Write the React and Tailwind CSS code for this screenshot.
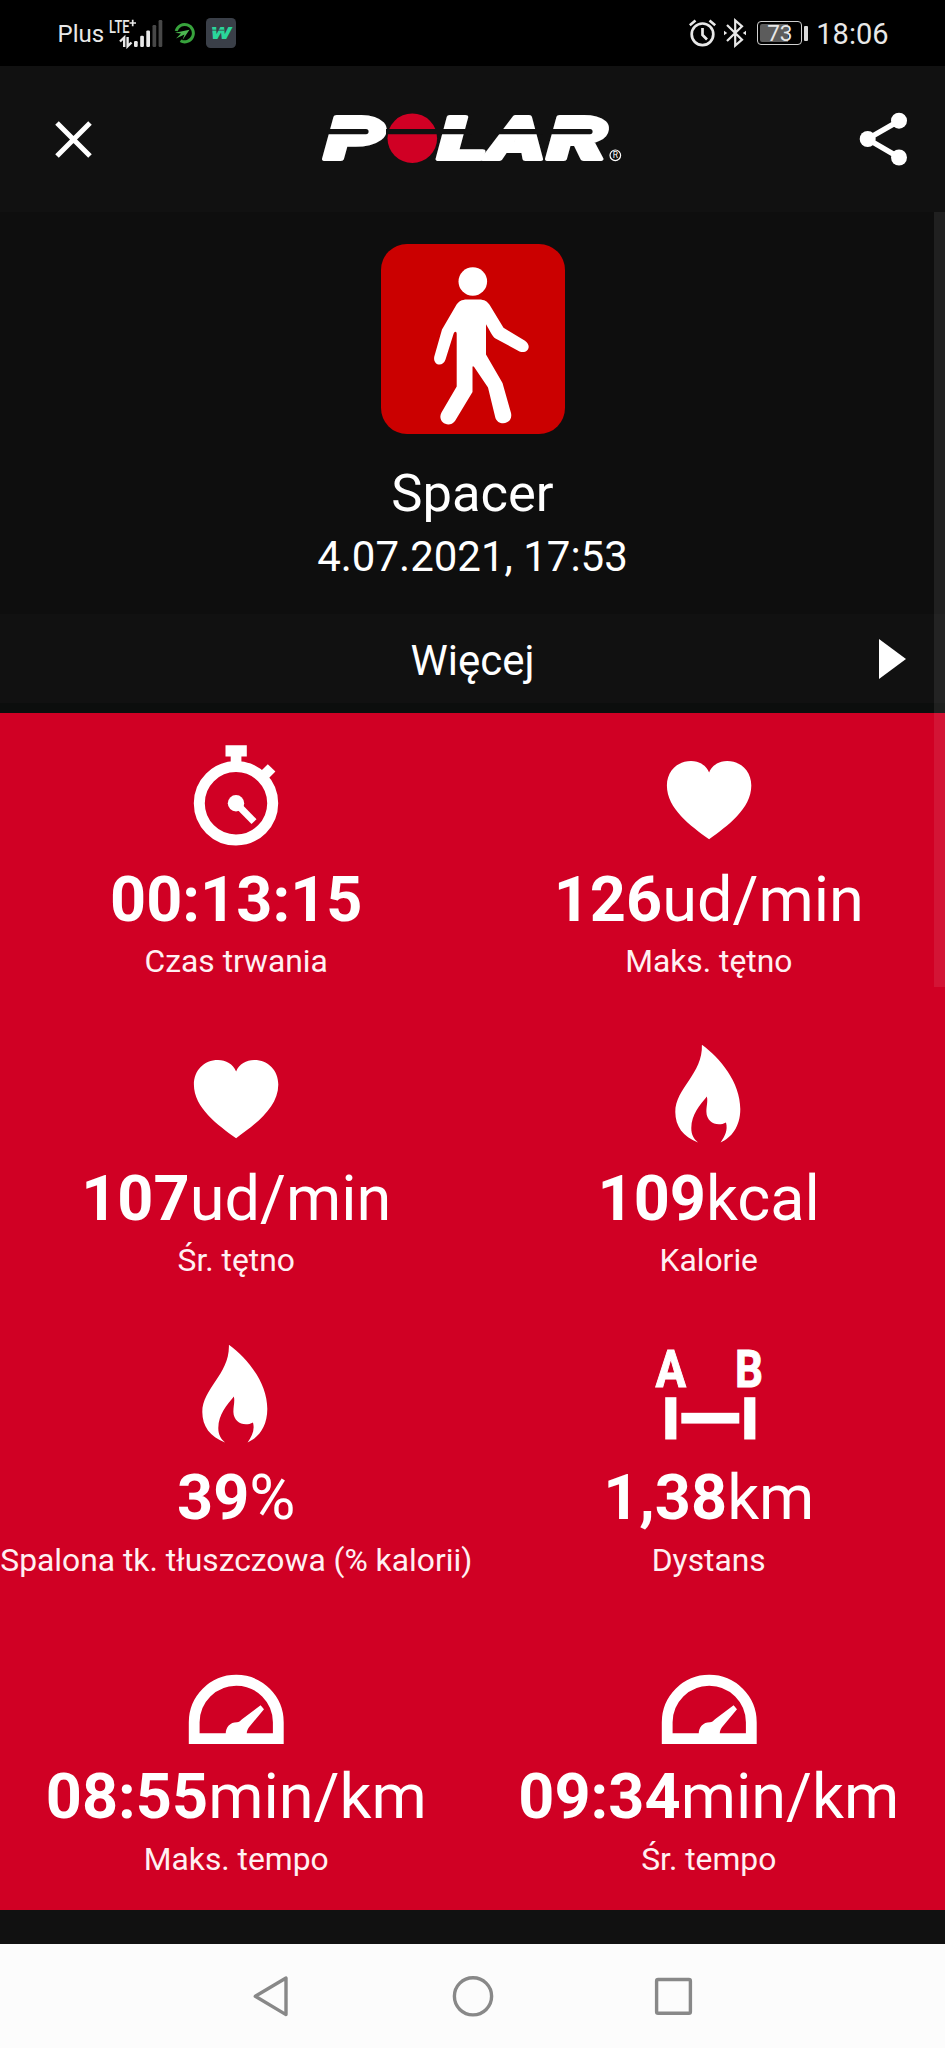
import { useState } from "react";

const StopwatchIcon = () => (
  <svg className="w-[120px] h-[110px]" viewBox="0 0 120 110" fill="white">
    <path d="M49.5 4.3H70.8V15.5H65.4V26H54.7V15.5H49.5Z" />
    <path d="M91.8 23.2L99.4 30.6L91 39L83.4 31.6Z" />
    <circle cx="60" cy="62.3" r="36.7" fill="none" stroke="white" strokeWidth="11" />
    <circle cx="60" cy="62.3" r="8.2" />
    <path d="M60 62.3L78 80.6" stroke="white" strokeWidth="7" />
  </svg>
);

const HeartIcon = () => (
  <svg className="w-[120px] h-[110px]" viewBox="0 0 120 110" fill="white">
    <path d="M60.1 31.5C57 24 50 20 42 20C28 20 17.9 30.5 17.9 44.5C17.9 68 42 85 60.1 98.3C78.2 85 102.3 68 102.3 44.5C102.3 30.5 92.2 20 78.2 20C70.2 20 63.2 24 60.1 31.5Z" />
  </svg>
);

const FlameIcon = () => (
  <svg className="w-[120px] h-[110px]" viewBox="0 0 120 110" fill="white">
    <path d="M52.9 4.7C71 18 91.3 42 91.3 69C91.3 87 82 98 71.6 102.4C76 96 79 90 77 82.4C68 87.5 57.6 82 57.4 72C57.3 66 59 62 57.9 56.4C51 65 42.5 74 42.3 88C42.2 95 45 99 49 102.4C34 97 26.3 86 26.3 72C26.3 48 54 34 52.9 4.7Z" />
  </svg>
);

const DistanceIcon = () => (
  <svg className="w-[120px] h-[120px] -mt-[10px]" viewBox="0 -10 120 120" fill="white">
    <g fontFamily="Roboto, sans-serif" fontWeight="700" fontSize="52.5">
      <text x="6.6" y="46.8" stroke="white" strokeWidth="1" textLength="30.6" lengthAdjust="spacingAndGlyphs">A</text>
      <text x="86" y="46.8" stroke="white" strokeWidth="1" textLength="28" lengthAdjust="spacingAndGlyphs">B</text>
    </g>
    <rect x="16.2" y="57.2" width="11.2" height="42.3" />
    <rect x="32.3" y="72.8" width="58" height="10.8" />
    <rect x="95.2" y="57.2" width="11.2" height="42.3" />
  </svg>
);

const GaugeIcon = () => (
  <svg className="w-[120px] h-[110px]" viewBox="0 0 120 110" fill="white">
    <path d="M18.2 99.6V83.3A42.05 42.05 0 0 1 102.3 83.3V99.6Z" fill="none" stroke="white" strokeWidth="10.8" />
    <path d="M49.7 95C49.7 88 54 83.2 61 83.2C63 83.2 64 82 66 80.2L84.6 66.2L88 70.2L74 87C72 89.5 70.7 91.5 70.7 95Z" />
  </svg>
);

const WalkIcon = () => (
  <svg className="w-[184px] h-[190px]" viewBox="0 0 184 190">
    <rect width="184" height="190" rx="26" fill="#cb0000" />
    <circle cx="91.8" cy="37.5" r="14.3" fill="white" />
    <path
      d="M86 55.5H98C103.5 55.5 106.5 57.5 109 61.5L122.5 83.7L144 96.7C151.5 102 146.5 110.5 138.5 107.5L114.5 94.5C111.5 92.5 109 87 105 80.2V110.5L121.5 139L130 169C132.5 180.5 117 183 114.3 173.5L107 143.5L92.8 122.5H91.5V148L74 177C68 185 55.5 178 60.5 168.5L75.7 142.5V90C75.7 87 73.5 87 72.5 90L64.5 115.5C62 123.5 51.5 121.5 53.3 112.5L61 85.5L75 61.5C77.5 57.5 80.5 55.5 86 55.5Z"
      fill="white"
    />
  </svg>
);

const PolarLogo = () => (
  <svg className="w-[345px] h-[100px] mr-[5px]" viewBox="0 0 345 100">
    <g
      fill="white"
      stroke="white"
      strokeWidth="4"
      strokeLinejoin="round"
      fontFamily="Roboto, sans-serif"
      fontWeight="900"
      fontStyle="italic"
      fontSize="59"
    >
      <text x="25" y="70" textLength="59" lengthAdjust="spacingAndGlyphs">P</text>
      <text x="138.5" y="70" textLength="48" lengthAdjust="spacingAndGlyphs">L</text>
      <text x="188.5" y="70" textLength="56" lengthAdjust="spacingAndGlyphs">A</text>
      <text x="248" y="70" textLength="59" lengthAdjust="spacingAndGlyphs">R</text>
    </g>
    <path d="M46 35H66V52H42Z M270 35H290V52H266Z M219 40H229V56H213Z" fill="white" />
    <circle cx="112.3" cy="49.2" r="24.8" fill="#d00024" />
    <path d="M28 40H66A2.6 2.6 0 0 1 66 45.2H26Z M86 40H172V45.2H86Z M194 40H243V45.2H194Z M252 40H290A2.6 2.6 0 0 1 290 45.2H250Z" fill="#111111" />
    <circle cx="315.3" cy="66.3" r="5.3" fill="none" stroke="white" strokeWidth="1.2" />
    <text x="315.4" y="69.4" fill="white" fontFamily="Roboto, sans-serif" fontSize="8.5" textAnchor="middle">R</text>
  </svg>
);

const SignalIcon = () => (
  <svg className="w-[56px] h-[32px]" viewBox="0 0 56 32" fill="#e8e8e8">
    <text x="0" y="15.5" fontFamily="Roboto, sans-serif" fontWeight="500" fontSize="17.5" textLength="20.5" lengthAdjust="spacingAndGlyphs">LTE</text>
    <path d="M20.5 6H27M23.7 2.8V9.2" stroke="#e8e8e8" strokeWidth="1.7" />
    <path d="M11 24.5L15.2 20.5V30M18.6 20V29.3L22.5 25.5" fill="none" stroke="#e8e8e8" strokeWidth="2.4" />
    <rect x="25" y="24" width="3.7" height="6" rx="1.2" />
    <rect x="31.2" y="18.8" width="3.7" height="11.2" rx="1.2" />
    <rect x="37.3" y="13.4" width="3.7" height="16.6" rx="1.2" />
    <rect x="43.5" y="8" width="3.7" height="22" rx="1.2" fill="#484848" />
    <rect x="49.6" y="3" width="3.7" height="27" rx="1.2" fill="#484848" />
  </svg>
);

const StatusBar = () => (
  <div className="h-[66px] bg-black text-[#e8e8e8] flex items-center justify-between pl-[57.5px] pr-[56.5px]">
    <div className="flex items-center">
      <span className="w-[51px] text-[24px] leading-[28px] pt-[2px]">Plus</span>
      <SignalIcon />
      <svg className="w-[22px] h-[22px] ml-[9.5px]" viewBox="0 0 22 22">
        <path d="M2.2 9A8.7 8.7 0 1 1 6.5 18.8" fill="none" stroke="#37a33c" strokeWidth="3" />
        <path d="M15.5 7.8L1 10.8L7 11.6L2 16.5L10.5 12.6L8.5 18Z" fill="#4cb850" />
      </svg>
      <svg className="w-[30px] h-[30px] ml-[10px]" viewBox="0 0 30 30">
        <rect width="30" height="30" rx="4.5" fill="#3a3f48" />
        <text x="4.2" y="21" fill="#2ad69a" fontFamily="Roboto, sans-serif" fontWeight="900" fontStyle="italic" fontSize="16.5" textLength="21" lengthAdjust="spacingAndGlyphs">W</text>
        <path d="M4 12.2H18" stroke="#3a3f48" strokeWidth="0.8" />
      </svg>
    </div>
    <div className="flex items-center">
      <svg className="w-[28px] h-[30px]" viewBox="0 0 28 30" fill="none" stroke="#e8e8e8">
        <circle cx="13.5" cy="16.3" r="10.8" strokeWidth="2.7" />
        <path d="M13.5 10V17L18 21.5" strokeWidth="2.7" />
        <path d="M0.8 7.2L6.5 2.4M26.2 7.2L20.5 2.4" strokeWidth="2.6" />
      </svg>
      <svg className="w-[24px] h-[30px] ml-[6px]" viewBox="0 0 24 30">
        <path d="M4 7L19 21.7L12.2 27.5V2.5L19 8.3L4 23" fill="none" stroke="#e8e8e8" strokeWidth="2.2" />
        <path d="M1 12.8L4.2 15L1 17.2ZM23 12.8L19.8 15L23 17.2Z" fill="#e8e8e8" />
      </svg>
      <div className="w-[45px] h-[24px] ml-[10px] p-[2px] rounded-[4px] border-[1.5px] border-[#d0d0d0] relative">
        <div className="w-[28px] h-full bg-[#5c5c5c] rounded-l-[2px]"></div>
        <span className="absolute inset-0 text-center text-[22.5px] leading-[23px]">73</span>
      </div>
      <div className="w-[4px] h-[15px] ml-[2px] rounded-[1px] bg-[#d8d8d8]"></div>
      <span className="ml-[8px] text-[29px] leading-[34px] pt-[1px]">18:06</span>
    </div>
  </div>
);

const stats = [
  { id: 1, icon: StopwatchIcon, value: "00:13:15", unit: "", label: "Czas trwania" },
  { id: 2, icon: HeartIcon, value: "126", unit: "ud/min", label: "Maks. tętno" },
  { id: 3, icon: HeartIcon, value: "107", unit: "ud/min", label: "Śr. tętno" },
  { id: 4, icon: FlameIcon, value: "109", unit: "kcal", label: "Kalorie" },
  { id: 5, icon: FlameIcon, value: "39", unit: "%", label: "Spalona tk. tłuszczowa (% kalorii)" },
  { id: 6, icon: DistanceIcon, value: "1,38", unit: "km", label: "Dystans" },
  { id: 7, icon: GaugeIcon, value: "08:55", unit: "min/km", label: "Maks. tempo" },
  { id: 8, icon: GaugeIcon, value: "09:34", unit: "min/km", label: "Śr. tempo" },
];

const App = () => {
  const [training] = useState({ name: "Spacer", date: "4.07.2021, 17:53" });

  return (
    <div className="w-[945px] h-[2048px] bg-[#111111] text-white font-['Roboto',sans-serif] flex flex-col overflow-hidden">
      <StatusBar />

      <header className="h-[146px] flex items-center justify-between pl-[55px] pr-[37px]">
        <button className="w-[37px] h-[37px]">
          <svg className="w-[37px] h-[37px]" viewBox="0 0 37 37">
            <path d="M2 2L35 35M35 2L2 35" stroke="white" strokeWidth="5" />
          </svg>
        </button>
        <PolarLogo />
        <button className="w-[50px] h-[54px]">
          <svg className="w-[50px] h-[54px]" viewBox="0 0 50 54" fill="white">
            <path d="M41 8.8L9.5 27L41 45.3" fill="none" stroke="white" strokeWidth="5.4" />
            <circle cx="9.7" cy="27" r="8" />
            <circle cx="41" cy="8.7" r="8" />
            <circle cx="41" cy="45.5" r="8" />
          </svg>
        </button>
      </header>

      <main className="relative">
        <section className="h-[402px] bg-[#0e0e0e] flex flex-col items-center pt-[32px]">
          <WalkIcon />
          <h1 className="mt-[29px] text-[52.5px] leading-[60px]">{training.name}</h1>
          <p className="mt-[9px] text-[42px] leading-[50px]">{training.date}</p>
        </section>

        <button className="w-full h-[89px] grid grid-cols-[1fr_auto_1fr] items-center pr-[39px] pl-[39px]">
          <span></span>
          <span className="text-[42px] leading-[50px] pt-[4px]">Więcej</span>
          <svg className="w-[27px] h-[40px] justify-self-end" viewBox="0 0 27 40">
            <path d="M0 0L27 20L0 40Z" fill="white" />
          </svg>
        </button>
        <div className="h-[10px] bg-[#0c0e0d]"></div>

        <section className="h-[1197px] bg-[#d00024] grid grid-cols-2 grid-rows-4">
          {stats.map(({ id, icon: Icon, value, unit, label }) => (
            <div key={id} className="flex flex-col items-center pt-[28px]">
              <Icon />
              <div className="mt-[11.5px] text-[63px] leading-[74px] whitespace-nowrap">
                <span className="font-bold">{value}</span>
                {unit}
              </div>
              <div className="mt-[6.5px] text-[31.8px] leading-[36px] whitespace-nowrap text-[#fff0f2]">{label}</div>
            </div>
          ))}
        </section>

        {/* Scrollbar thumb */}
        <div className="absolute top-0 right-0 w-[11px] h-[775px] bg-white/8"></div>
      </main>

      <div className="h-[34px] bg-[#111111]"></div>

      <nav className="h-[104px] bg-[#fcfcfc] flex items-center justify-center gap-[159px]">
        <svg className="w-[42px] h-[42px]" viewBox="0 0 42 42" fill="none" stroke="#888888" strokeWidth="3.4" strokeLinejoin="round">
          <path d="M4.3 21.3L35 3V39.6Z" />
        </svg>
        <svg className="w-[42px] h-[42px]" viewBox="0 0 42 42" fill="none" stroke="#888888" strokeWidth="3.4">
          <circle cx="21" cy="21.3" r="18.6" />
        </svg>
        <svg className="w-[42px] h-[42px]" viewBox="0 0 42 42" fill="none" stroke="#888888" strokeWidth="3.4">
          <rect x="3.6" y="4.5" width="33.8" height="33.8" rx="1.5" />
        </svg>
      </nav>
    </div>
  );
};

export default App;
